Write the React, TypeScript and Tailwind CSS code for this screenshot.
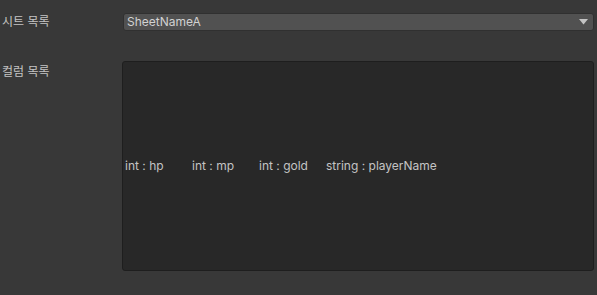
const columns = ["int : hp", "int : mp", "int : gold", "string : playerName"];

export default function App() {
  return (
    <div
      className="w-[597px] h-[295px] bg-[#383838] text-[#c4c4c4] text-[12px] pl-[2px] pr-[3px] pt-[13px] flex flex-col gap-[30px] overflow-hidden"
      style={{ fontFamily: 'Inter, "Noto Sans CJK KR", sans-serif' }}
    >
      <div className="flex items-center h-[18px]">
        <div className="w-[121px] shrink-0 leading-[18px]">시트 목록</div>
        <div className="flex-1 h-[18px] flex items-center justify-between bg-[#515151] border border-[#303030] rounded-[3px] pl-[3px] pr-[5px]">
          <span className="leading-[16px] text-[#d2d2d2]">SheetNameA</span>
          <svg width="9" height="6" viewBox="0 0 9 6">
            <path d="M0 0h9L4.5 5.5z" fill="#c4c4c4" />
          </svg>
        </div>
      </div>
      <div className="flex items-start">
        <div className="w-[120px] shrink-0 leading-[18px] pt-[2px]">컬럼 목록</div>
        <div className="flex-1 h-[210px] bg-[#282828] border border-[#1e1e1e] rounded-[3px] flex items-center pl-[2px]">
          {columns.map((c) => (
            <span key={c} className="w-[67px] shrink-0 whitespace-nowrap leading-[16px]">
              {c}
            </span>
          ))}
        </div>
      </div>
    </div>
  );
}
